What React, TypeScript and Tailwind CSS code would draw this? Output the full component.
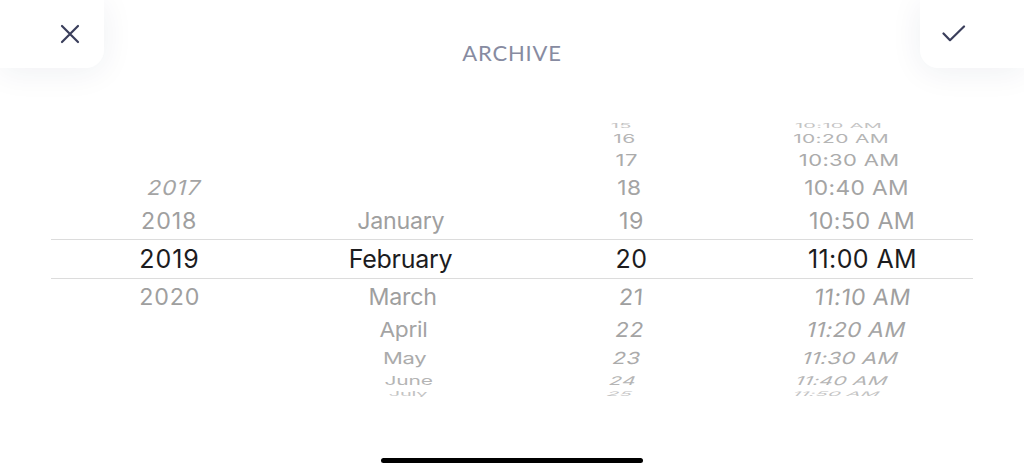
import React from "react";

type Cell = { t: string; x?: string } | null;

type Row = {
  h: string;
  s: string;
  cells: Cell[];
};

// per column letter spacing, the reference face is a touch wider than Inter
const COLS = ["tracking-[0.9px]", "tracking-[-0.3px]", "tracking-[0.6px]", "tracking-[0.4px]"];

// rows of the wheel, top to bottom; the middle one is the selection band
const ROWS: Row[] = [
  {
    h: "h-[8px]",
    s: "scale-x-[0.8] scale-y-[0.25] text-[#c4c4c4]",
    cells: [null, null, { t: "15", x: "-translate-x-[10px]" }, { t: "10:10 AM", x: "-translate-x-[24px]" }],
  },
  {
    h: "h-[18px]",
    s: "scale-x-[0.84] scale-y-[0.48] text-[#b5b5b5]",
    cells: [null, null, { t: "16", x: "-translate-x-[7px]" }, { t: "10:20 AM", x: "-translate-x-[21px]" }],
  },
  {
    h: "h-[26px]",
    s: "scale-x-[0.88] scale-y-[0.66] text-[#ababab]",
    cells: [null, null, { t: "17", x: "-translate-x-[5px]" }, { t: "10:30 AM", x: "-translate-x-[13px]" }],
  },
  {
    h: "h-[30px]",
    s: "scale-x-[0.91] scale-y-[0.82] text-[#a4a4a4]",
    cells: [
      { t: "2017", x: "translate-x-[5px] -skew-x-[12deg]" },
      null,
      { t: "18", x: "-translate-x-[2px]" },
      { t: "10:40 AM", x: "-translate-x-[6px]" },
    ],
  },
  {
    h: "h-[36px]",
    s: "scale-x-[0.93] scale-y-[0.9] text-[#9f9f9f]",
    cells: [{ t: "2018" }, { t: "January" }, { t: "19" }, { t: "10:50 AM" }],
  },
  {
    h: "h-[40px] border-y border-[#dcdcdc]",
    s: "text-[#1c1c1e]",
    cells: [{ t: "2019" }, { t: "February" }, { t: "20" }, { t: "11:00 AM" }],
  },
  {
    h: "h-[36px]",
    s: "scale-x-[0.93] scale-y-[0.9] text-[#9f9f9f]",
    cells: [
      { t: "2020" },
      { t: "March", x: "translate-x-[2px]" },
      { t: "21", x: "-skew-x-[4deg]" },
      { t: "11:10 AM", x: "-skew-x-[6deg]" },
    ],
  },
  {
    h: "h-[30px]",
    s: "scale-x-[0.91] scale-y-[0.82] text-[#a4a4a4]",
    cells: [
      null,
      { t: "April", x: "translate-x-[3px]" },
      { t: "22", x: "-translate-x-[2px] -skew-x-[8deg]" },
      { t: "11:20 AM", x: "-translate-x-[6px] -skew-x-[12deg]" },
    ],
  },
  {
    h: "h-[26px]",
    s: "scale-x-[0.88] scale-y-[0.66] text-[#ababab]",
    cells: [
      null,
      { t: "May", x: "translate-x-[4px]" },
      { t: "23", x: "-translate-x-[5px] -skew-x-[12deg]" },
      { t: "11:30 AM", x: "-translate-x-[12px] -skew-x-[14deg]" },
    ],
  },
  {
    h: "h-[18px]",
    s: "scale-x-[0.84] scale-y-[0.48] text-[#b5b5b5]",
    cells: [
      null,
      { t: "June", x: "translate-x-[8px]" },
      { t: "24", x: "-translate-x-[8px] -skew-x-[14deg]" },
      { t: "11:40 AM", x: "-translate-x-[21px] -skew-x-[16deg]" },
    ],
  },
  {
    h: "h-[8px]",
    s: "scale-x-[0.8] scale-y-[0.25] text-[#c4c4c4]",
    cells: [
      null,
      { t: "July", x: "translate-x-[8px]" },
      { t: "25", x: "-translate-x-[12px] -skew-x-[14deg]" },
      { t: "11:50 AM", x: "-translate-x-[26px] -skew-x-[16deg]" },
    ],
  },
];

function CloseIcon() {
  return (
    <svg width="20" height="20" viewBox="0 0 20 20" fill="none">
      <path d="M2 2L18 18M18 2L2 18" stroke="#3a3e5b" strokeWidth="2.2" strokeLinecap="round" />
    </svg>
  );
}

function CheckIcon() {
  return (
    <svg width="24" height="18" viewBox="0 0 24 18" fill="none">
      <path
        d="M1.5 8.5L8 15.2L22 1.5"
        stroke="#3a3e5b"
        strokeWidth="2.2"
        strokeLinecap="round"
        strokeLinejoin="round"
      />
    </svg>
  );
}

export default function App() {
  return (
    <div className="w-[1024px] h-[473px] overflow-hidden bg-white flex flex-col">
      {/* header */}
      <div className="flex items-start justify-between h-[68px]">
        <button
          type="button"
          className="w-[104px] h-[68px] bg-white rounded-br-[18px] shadow-[0_4px_32px_rgba(30,40,80,0.07)] flex items-center justify-end pr-[24px]"
        >
          <CloseIcon />
        </button>
        <div className="pt-[38px] text-[22px] leading-[30px] tracking-[0.8px] text-[#878ba1] font-['Lato',sans-serif]">
          ARCHIVE
        </div>
        <button
          type="button"
          className="w-[104px] h-[68px] bg-white rounded-bl-[18px] shadow-[0_4px_32px_rgba(30,40,80,0.07)] flex items-center justify-start pl-[22px]"
        >
          <CheckIcon />
        </button>
      </div>

      {/* wheel picker */}
      <div className="mt-[53px] mx-[51px] overflow-hidden font-['Inter',sans-serif] text-[25px]">
        {ROWS.map((row, i) => (
          <div key={i} className={`grid grid-cols-[231px_231px_231px_231px] grid-rows-1 pl-[3px] box-border ${row.h}`}>
            {row.cells.map((cell, j) => (
              <div key={j} className={`flex items-center justify-center min-h-0 ${COLS[j]}`}>
                {cell && (
                  <span className={`inline-block whitespace-nowrap leading-none ${row.s} ${cell.x ?? ""}`}>
                    {cell.t}
                  </span>
                )}
              </div>
            ))}
          </div>
        ))}
      </div>

      {/* home indicator */}
      <div className="mt-[61px] mx-auto w-[262px] h-[5px] rounded-full bg-black" />
    </div>
  );
}
